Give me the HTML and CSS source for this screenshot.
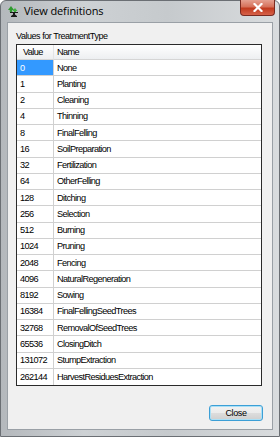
FILE: index.html
```html
<!DOCTYPE html>
<html>
<head>
<meta charset="utf-8">
<link rel="stylesheet" href="styles.css">
</head>
<body>
<div class="window">
  <div class="titlebar">
    <svg class="appicon" width="11" height="11" viewBox="0 0 11 11">
      <path d="M3 0 L6 4 H4.2 V6 H1.8 V4 H0 Z" fill="#2f9a2f"/>
      <path d="M2 6 H10 V7 H7 V8.5 L9 10 V11 H3 V10 L5 8.5 V7 H2 Z" fill="#1a1a1a"/>
      <path d="M7 2 L9.5 5 H8 V6 H6 V5 H4.5 Z" fill="#3fb03f"/>
    </svg>
    <span class="title">View definitions</span>
    <div class="closex">
      <svg width="10" height="9" viewBox="0 0 10 9"><path d="M1.5 1 L8.5 8 M8.5 1 L1.5 8" stroke="#fff" stroke-width="2.2" stroke-linecap="square"/></svg>
    </div>
  </div>
  <div class="client">
    <div class="label">Values for TreatmentType</div>
    <div class="grid">
      <div class="row head"><div class="c1">Value</div><div class="c2">Name</div></div>
      <div class="row"><div class="c1 sel">0</div><div class="c2">None</div></div>
      <div class="row"><div class="c1">1</div><div class="c2">Planting</div></div>
      <div class="row"><div class="c1">2</div><div class="c2">Cleaning</div></div>
      <div class="row"><div class="c1">4</div><div class="c2">Thinning</div></div>
      <div class="row"><div class="c1">8</div><div class="c2">FinalFelling</div></div>
      <div class="row"><div class="c1">16</div><div class="c2">SoilPreparation</div></div>
      <div class="row"><div class="c1">32</div><div class="c2">Fertilization</div></div>
      <div class="row"><div class="c1">64</div><div class="c2">OtherFelling</div></div>
      <div class="row"><div class="c1">128</div><div class="c2">Ditching</div></div>
      <div class="row"><div class="c1">256</div><div class="c2">Selection</div></div>
      <div class="row"><div class="c1">512</div><div class="c2">Burning</div></div>
      <div class="row"><div class="c1">1024</div><div class="c2">Pruning</div></div>
      <div class="row"><div class="c1">2048</div><div class="c2">Fencing</div></div>
      <div class="row"><div class="c1">4096</div><div class="c2">NaturalRegeneration</div></div>
      <div class="row"><div class="c1">8192</div><div class="c2">Sowing</div></div>
      <div class="row"><div class="c1">16384</div><div class="c2">FinalFellingSeedTrees</div></div>
      <div class="row"><div class="c1">32768</div><div class="c2">RemovalOfSeedTrees</div></div>
      <div class="row"><div class="c1">65536</div><div class="c2">ClosingDitch</div></div>
      <div class="row"><div class="c1">131072</div><div class="c2">StumpExtraction</div></div>
      <div class="row last"><div class="c1">262144</div><div class="c2">HarvestResiduesExtraction</div></div>
    </div>
    <div class="footer"><button class="btn">Close</button></div>
  </div>
</div>
</body>
</html>
```
FILE: styles.css
```css
html, body { margin: 0; padding: 0; }
body { width: 280px; height: 437px; overflow: hidden; background: #fff; font-family: "Liberation Sans", Arial, sans-serif; }
.window {
  width: 280px; height: 437px; box-sizing: border-box;
  border: 1px solid #6b6f74; border-radius: 6px 6px 0 0;
  background: linear-gradient(90deg, #b4b8bc 0%, #cdd1d4 30%, #c6cacd 60%, #d9dcde 100%);
  display: flex; flex-direction: column;
  padding: 0 6px 6px 6px;
}
.titlebar {
  height: 21px; display: flex; align-items: center; position: relative;
}
.appicon { margin-left: 1px; margin-top: -1px; }
.title { font-family: "Open Sans", "Noto Sans", sans-serif; font-size: 11px; color: #000; margin-left: 5px; margin-top: -2px; letter-spacing: -0.1px; }
.closex {
  position: absolute; right: -2px; top: -1px; width: 35px; height: 16px;
  border: 1px solid #7a2a20; border-top: none; border-radius: 0 0 4px 4px; box-sizing: border-box;
  background: linear-gradient(180deg, #e5a090 0%, #d6715a 45%, #c13a1e 55%, #d6624a 100%);
  display: flex; align-items: center; justify-content: center;
}
.client {
  flex: 1; background: #f0f0f0; border: 1px solid #9aa0a6;
  display: flex; flex-direction: column; padding: 7px 10px 8px 8px;
}
.label { font-size: 9px; letter-spacing: -0.45px; color: #000; height: 14px; line-height: 13px; }
.grid {
  border: 1px solid #2a2a2a; background: #fff; display: flex; flex-direction: column;
}
.row { display: flex; flex: 0 0 16.25px; height: 16.25px; font-size: 9.2px; letter-spacing: -0.6px; color: #000; }
.row > div { display: flex; align-items: center; box-sizing: border-box; border-bottom: 1px solid #d0d0d0; }
.row.last > div { border-bottom: none; }
.c1 { width: 37px; padding-left: 3px; border-right: 1px solid #d0d0d0; }
.c2 { flex: 1; padding-left: 3px; }
.row.head { flex: 0 0 15px; height: 15px; background: linear-gradient(180deg, #ffffff 0%, #f5f6f7 50%, #eceef0 100%); }
.head .c1 { padding-left: 6px; border-right: 1px solid #e3e4e6; }
.head > div { border-bottom: 1px solid #d5d5d5; }
.sel { background: #3399ff; color: #fff; }
.footer { flex: 1; display: flex; justify-content: flex-end; align-items: flex-end; }
.btn {
  width: 54px; height: 16px; margin-right: -1px; padding: 0;
  font-family: "Liberation Sans", Arial, sans-serif; font-size: 9px; letter-spacing: -0.4px;
  border: 1px solid #3c9fd6; border-radius: 3px;
  background: linear-gradient(180deg, #f2f2f2 0%, #ebebeb 50%, #dddddd 51%, #cfcfcf 100%);
  box-shadow: inset 0 0 0 1px #a9e0f7; color: #000;
}
```
